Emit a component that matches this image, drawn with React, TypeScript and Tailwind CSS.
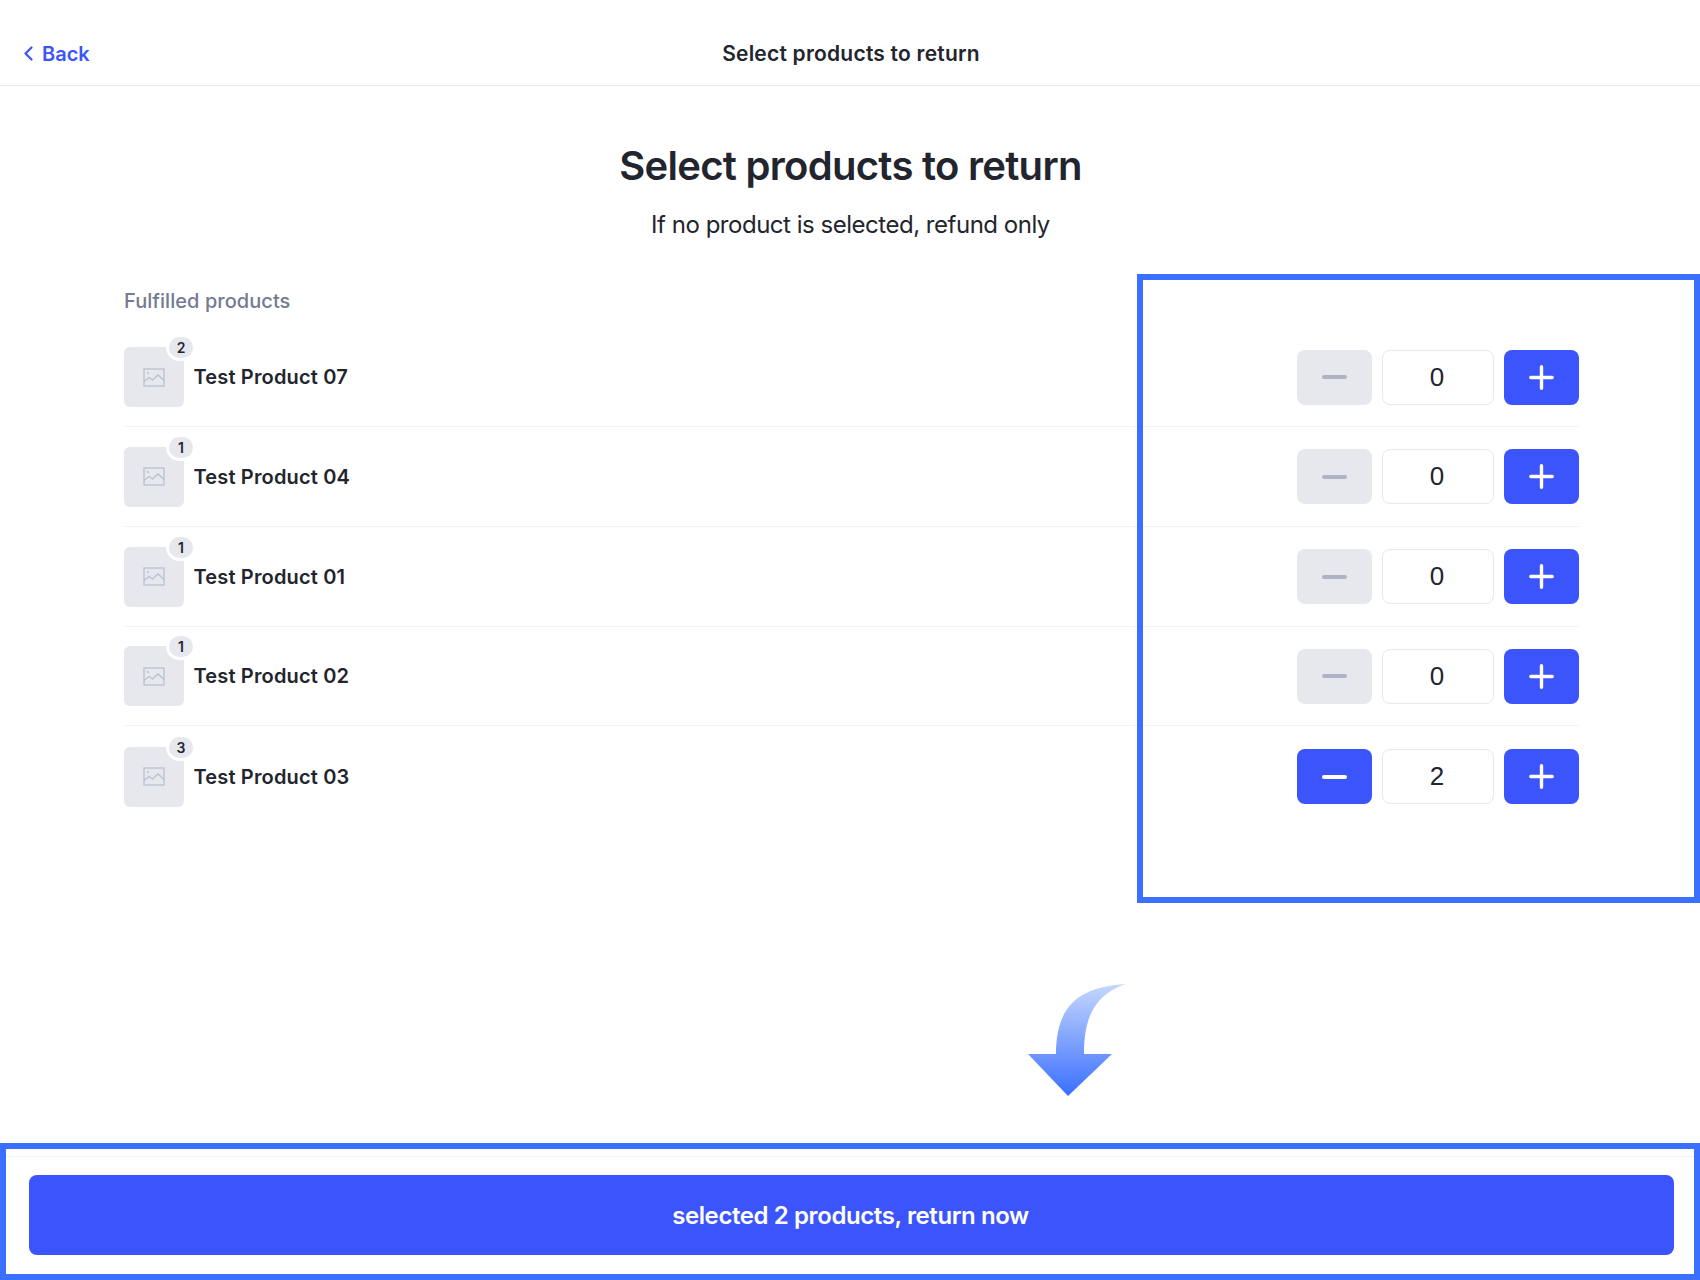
const products = [
  { name: 'Test Product 07', count: 2, value: 0 },
  { name: 'Test Product 04', count: 1, value: 0 },
  { name: 'Test Product 01', count: 1, value: 0 },
  { name: 'Test Product 02', count: 1, value: 0 },
  { name: 'Test Product 03', count: 3, value: 2 },
];

function ImageIcon() {
  return (
    <svg width="22" height="19" viewBox="0 0 22 19" fill="none" stroke="#b9c0d0" strokeWidth="1.3">
      <rect x="1" y="1" width="20" height="17" />
      <circle cx="5" cy="5" r="1" fill="#b9c0d0" stroke="none" />
      <path d="M1 13.5l5-4 3.5 2.5 5.5-5 6 5.5" />
    </svg>
  );
}

function Minus({ active }: { active: boolean }) {
  return <span className={active ? 'block w-[25px] h-[4px] rounded-full bg-white' : 'block w-[25px] h-[4px] rounded-full bg-[#aeb4c5]'} />;
}

function Plus() {
  return (
    <svg width="25" height="25" viewBox="0 0 25 25" stroke="#ffffff" strokeWidth="3.4" strokeLinecap="round">
      <path d="M12.5 1.8v21.4M1.8 12.5h21.4" />
    </svg>
  );
}

function ProductRow({ name, count, value, last }: { name: string; count: number; value: number; last: boolean }) {
  const active = value > 0;
  return (
    <div className={last ? 'flex items-center justify-between h-[99.75px] pt-[1px]' : 'flex items-center justify-between h-[99.75px] pt-[1px] border-b-[1.5px] border-[#f0f2f6]'}>
      <div className="flex items-center">
        <div className="relative w-[60px] h-[60px] rounded-[6px] bg-[#e6e8ee] flex items-center justify-center">
          <ImageIcon />
          <span className="absolute -top-[13px] -right-[12px] w-[30px] h-[27px] rounded-full bg-[#e6e8ee] border-[3px] border-white box-border flex items-center justify-center text-[14px] font-semibold text-[#22252e]">
            {count}
          </span>
        </div>
        <span className="ml-[9.5px] text-[20px] font-semibold tracking-[0.16px] text-[#22252e]">{name}</span>
      </div>
      <div className="flex items-center gap-[10px]">
        <button className={active ? 'w-[75px] h-[55px] rounded-[8px] bg-[#3b54fb] flex items-center justify-center' : 'w-[75px] h-[55px] rounded-[8px] bg-[#e6e8ee] flex items-center justify-center'}>
          <Minus active={active} />
        </button>
        <input
          readOnly
          value={value}
          className="w-[112px] h-[55px] pr-[2px] rounded-[8px] border-[1.5px] border-[#e6e8f0] bg-white text-center text-[26px] text-[#22252e] font-['Liberation_Sans',sans-serif] outline-none"
        />
        <button className="w-[75px] h-[55px] rounded-[8px] bg-[#3b54fb] flex items-center justify-center">
          <Plus />
        </button>
      </div>
    </div>
  );
}

export default function App() {
  return (
    <div className="relative flex flex-col w-[1700px] h-[1280px] overflow-hidden bg-white font-['Inter',sans-serif]">
      {/* Top bar */}
      <header className="grid grid-cols-3 items-center h-[86px] pt-[22px] pl-[24px] border-b-[1.5px] border-[#e6e8f0]">
        <div className="flex items-center gap-[9px] text-[20px] font-semibold text-[#3b54fb]">
          <svg width="9" height="15" viewBox="0 0 9 15" fill="none" stroke="#3b54fb" strokeWidth="2.2" strokeLinecap="round" strokeLinejoin="round">
            <path d="M7.5 1.5L1.5 7.5l6 6" />
          </svg>
          Back
        </div>
        <div className="text-center text-[21px] font-semibold tracking-[0.22px] text-[#22252e] whitespace-nowrap -ml-[22px]">Select products to return</div>
      </header>

      <main className="flex-1 pl-[124px] pr-[121px]">
        <h1 className="mt-[55px] text-center text-[40px] leading-[50px] font-semibold tracking-[-0.72px] text-[#22252e] -translate-x-[1px]">
          Select products to return
        </h1>
        <p className="mt-[18px] text-center text-[24px] leading-[32px] tracking-[-0.48px] text-[#22252e] -translate-x-[1px]">If no product is selected, refund only</p>
        <h2 className="mt-[46px] text-[20px] leading-[28px] font-medium tracking-[0.05px] text-[#737a91]">Fulfilled products</h2>
        <div className="mt-[12.25px]">
          {products.map((p, i) => (
            <ProductRow key={p.name} name={p.name} count={p.count} value={p.value} last={i === products.length - 1} />
          ))}
        </div>
      </main>

      <footer className="pt-[18px] pb-[25px] pl-[29px] pr-[26px] border-t-[1.5px] border-[#f0f2f6]">
        <button className="w-full h-[80px] pt-[1px] pr-[2px] rounded-[8px] bg-[#3b54fb] text-white text-[24px] font-semibold tracking-[-0.4px]">
          selected 2 products, return now
        </button>
      </footer>

      {/* Annotation overlays */}
      <div className="absolute left-[1137px] top-[274px] w-[563px] h-[629px] border-[6px] border-[#3a6fff] pointer-events-none" />
      <div className="absolute left-0 top-[1143px] w-[1700px] h-[137px] border-[6px] border-[#3a6fff] pointer-events-none" />
      <svg className="absolute left-[1020px] top-[980px]" width="112" height="120" viewBox="1020 980 112 120">
        <defs>
          <linearGradient id="arrowFill" x1="0" y1="0" x2="0" y2="1">
            <stop offset="0" stopColor="#c6d7ff" />
            <stop offset="1" stopColor="#3a6fff" />
          </linearGradient>
        </defs>
        <path
          d="M1125.5 984C1085 987 1056 1000 1056 1054L1028 1054L1068 1096L1112 1054L1084 1054C1084 1018 1094 995 1125.5 984Z"
          fill="url(#arrowFill)"
        />
      </svg>
    </div>
  );
}
